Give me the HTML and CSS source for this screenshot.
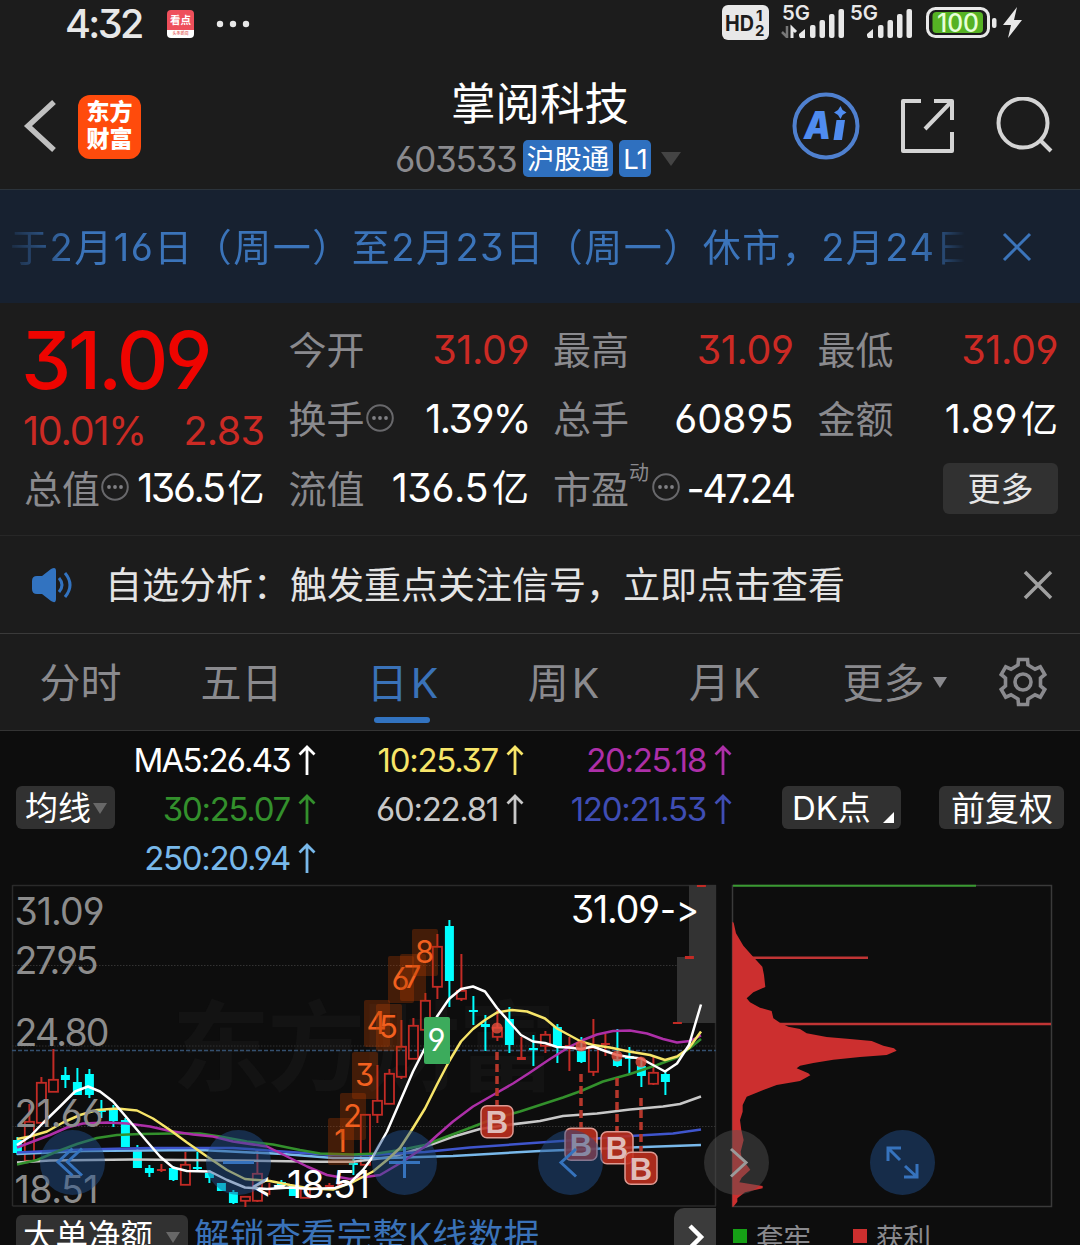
FILE: index.html
```
<!DOCTYPE html>
<html lang="zh-CN">
<head>
    <meta charset="UTF-8">
    <meta name="viewport" content="width=device-width, initial-scale=1.0">
    <title>掌阅科技 603533</title>
    <link rel="stylesheet" href="styles.css">
</head>
<body>
    <div class="screen">
        <!-- System status bar -->
        <div class="status-bar">
            <span class="clock">4:32</span>
            <span class="notif-icon"><b>看点</b><i>头条新闻</i></span>
            <svg class="notif-dots" width="34" height="8" viewBox="0 0 34 8">
                <circle cx="4" cy="4" r="3.2"/><circle cx="17" cy="4" r="3.2"/><circle cx="30" cy="4" r="3.2"/>
            </svg>
            <svg class="status-icons" width="302" height="48" viewBox="722 0 302 48">
                <rect x="722" y="5" width="47" height="35" rx="6" fill="#e8e8e8"/>
                <g class="hd-text">
                    <text x="725" y="30.500" font-size="21.500" textLength="29" lengthAdjust="spacingAndGlyphs">HD</text>
                    <text x="756" y="20.500" font-size="15">1</text>
                    <text x="755" y="36" font-size="15">2</text>
                </g>
                <g class="net-text">
                    <text x="782" y="20" font-size="20" textLength="28" lengthAdjust="spacingAndGlyphs">5G</text>
                    <text x="850" y="20" font-size="20" textLength="28" lengthAdjust="spacingAndGlyphs">5G</text>
                </g>
                <path d="M787 26v12M787 37l-5-5" fill="none" stroke="#777" stroke-width="2.500"/>
                <path d="M792 38V28l4 4" fill="none" stroke="#e8e8e8" stroke-width="3"/>
                <g fill="#e8e8e8">
                    <path d="M799 36v-2l6-5v9h-5z"/>
                    <rect x="810" y="25" width="5.500" height="13" rx="2"/>
                    <rect x="819.500" y="20" width="5.500" height="18" rx="2"/>
                    <rect x="829" y="14" width="5.500" height="24" rx="2"/>
                    <rect x="838.500" y="9" width="5.500" height="29" rx="2"/>
                    <path d="M867 36v-2l6-5v9h-5z"/>
                    <rect x="878" y="25" width="5.500" height="13" rx="2"/>
                    <rect x="887.500" y="20" width="5.500" height="18" rx="2"/>
                    <rect x="897" y="14" width="5.500" height="24" rx="2"/>
                    <rect x="906.500" y="9" width="5.500" height="29" rx="2"/>
                    <rect x="992" y="18" width="4.500" height="10" rx="2"/>
                    <path d="M1017 7l-14 18h8l-3 13 14-18h-8z"/>
                </g>
                <rect x="927.500" y="8.500" width="61" height="28" rx="8" fill="#1c1c1c" stroke="#e8e8e8" stroke-width="3"/>
                <rect x="932.500" y="12" width="50.500" height="21" rx="4" fill="#56b224"/>
                <text class="battery-text" x="937" y="32" font-size="25" textLength="42" lengthAdjust="spacingAndGlyphs">100</text>
            </svg>
        </div>

        <!-- Title bar -->
        <header class="header">
            <svg class="back" width="34" height="56" viewBox="0 0 34 56"><path d="M31 4L5 28l26 24"/></svg>
            <div class="logo">东方<br>财富</div>
            <div class="title">
                <h1>掌阅科技</h1>
                <div class="subtitle">
                    <span class="code">603533</span>
                    <span class="tag">沪股通</span>
                    <span class="tag tag-level">L1</span>
                    <span class="caret caret-large"></span>
                </div>
            </div>
            <div class="actions">
                <svg width="68" height="68" viewBox="0 0 68 68">
                    <circle cx="34" cy="34" r="31.500" fill="none" stroke="#4f80cf" stroke-width="4"/>
                    <text class="ai-text" x="12" y="47" font-size="38" textLength="27" lengthAdjust="spacingAndGlyphs">A</text>
                    <path d="M44.500 28h8.500l-3 20h-8.500z" fill="#4f8cf0"/>
                    <path d="M48.500 14l2 4 4 2.500-4 2.500-2 4-2.500-4-4-2.500 4-2.500z" fill="#4f8cf0"/>
                </svg>
                <svg class="line-icon" width="56" height="56" viewBox="0 0 56 56">
                    <path d="M21 3H3v50h49V34M34 3h18v19M52 3L25 31"/>
                </svg>
                <svg class="line-icon" width="58" height="58" viewBox="0 0 58 58">
                    <circle cx="27" cy="26" r="24.500"/><path d="M44 43l11 11"/>
                </svg>
            </div>
        </header>

        <!-- Scrolling holiday notice -->
        <div class="notice">
            <div class="notice-text">于2月16日（周一）至2月23日（周一）休市，2月24日</div>
            <svg class="notice-close" width="30" height="30" viewBox="0 0 30 30"><path d="M2 2l26 26M28 2L2 28"/></svg>
        </div>

        <!-- Quote data -->
        <section class="quote">
            <div class="quote-col">
                <div class="price">31.09</div>
                <div class="change"><span>10.01%</span><span class="diff">2.83</span></div>
                <div class="cell"><span class="label">总值</span><svg class="info"><use href="#info"/></svg><span class="value tight">136.5<em>亿</em></span></div>
            </div>
            <div class="quote-col">
                <div class="cell"><span class="label">今开</span><span class="value up">31.09</span></div>
                <div class="cell"><span class="label">换手</span><svg class="info"><use href="#info"/></svg><span class="value percent">1.39%</span></div>
                <div class="cell"><span class="label">流值</span><span class="value">136.5<em>亿</em></span></div>
            </div>
            <div class="quote-col">
                <div class="cell"><span class="label">最高</span><span class="value up">31.09</span></div>
                <div class="cell"><span class="label">总手</span><span class="value wide">60895</span></div>
                <div class="cell"><span class="label">市盈</span><sup>动</sup><svg class="info"><use href="#info"/></svg><span class="value tight">-47.24</span></div>
            </div>
            <div class="quote-col">
                <div class="cell"><span class="label">最低</span><span class="value up">31.09</span></div>
                <div class="cell"><span class="label">金额</span><span class="value">1.89<em>亿</em></span></div>
                <div class="cell"><button class="more-btn">更多</button></div>
            </div>
        </section>

        <!-- Watchlist analysis strip -->
        <div class="analysis">
            <svg width="42" height="36" viewBox="0 0 42 36">
                <path d="M1 14q0-5 5-5h5L20 2q5-3 5 2v28q0 5-5 2l-9-7H6q-5 0-5-5z" fill="#3273c0"/>
                <path d="M28 11q6 7 0 14M34 6q10 12 0 24" fill="none" stroke="#3273c0" stroke-width="3"/>
            </svg>
            <span class="analysis-text">自选分析：触发重点关注信号，立即点击查看</span>
            <svg class="analysis-close" width="30" height="30" viewBox="0 0 30 30"><path d="M2 2l26 26M28 2L2 28"/></svg>
        </div>

        <!-- Period tabs -->
        <nav class="tabs">
            <a class="tab">分时</a>
            <a class="tab">五日</a>
            <a class="tab active">日<span class="k">K</span></a>
            <a class="tab">周<span class="k">K</span></a>
            <a class="tab">月<span class="k">K</span></a>
            <a class="tab tab-more">更多<span class="caret caret-tab"></span></a>
            <svg class="gear" width="50" height="50" viewBox="0 0 50 50">
                <path d="M20 8L20.500 2.500H29.500L30 8L37 12.200L42.300 9.800L46.800 17.500L42.500 21V29L46.800 32.500L42.300 40.200L37 37.800L30 42L29.500 47.500H20.500L20 42L13 37.800L7.700 40.200L3.200 32.500L7.500 29V21L3.200 17.500L7.700 9.800L13 12.200Z"/>
                <circle cx="25" cy="25" r="8"/>
            </svg>
        </nav>

        <!-- Moving averages -->
        <div class="ma-bar">
            <button class="chip">均线<span class="caret caret-small"></span></button>
            <div class="ma-grid">
                <span class="ma ma5">MA5:26.43<svg><use href="#up"/></svg></span>
                <span class="ma ma10">10:25.37<svg><use href="#up"/></svg></span>
                <span class="ma ma20">20:25.18<svg><use href="#up"/></svg></span>
                <span class="ma ma30">30:25.07<svg><use href="#up"/></svg></span>
                <span class="ma ma60">60:22.81<svg><use href="#up"/></svg></span>
                <span class="ma ma120">120:21.53<svg><use href="#up"/></svg></span>
                <span class="ma ma250">250:20.94<svg><use href="#up"/></svg></span>
            </div>
            <button class="chip chip-dk">DK点<span class="corner"></span></button>
            <button class="chip chip-fq">前复权</button>
        </div>

        <!-- K line + chip distribution -->
        <div class="charts">
            <svg class="kline" id="kline" width="720" height="324" viewBox="0 884 720 324">
                <text class="watermark" x="172" y="1083" textLength="384">东方财富</text>
                <path d="M12.500 885.500H716M12.500 1206H716M12.500 885V1206M715.500 885V1206" stroke="#2a2a2a" stroke-width="1.500"/>
                <path d="M12 965.500H716M12 1046H716M12 1126.500H716" stroke="#333" stroke-dasharray="1.500 1.500"/>
                <path d="M12 1050.500H716" stroke="#34506f" stroke-width="1.500" stroke-dasharray="4 2"/>
                <rect x="677" y="957" width="39" height="66" fill="#333"/>
                <rect x="689" y="885" width="27" height="73" fill="#333"/>
                <g id="candles"></g>
                <g id="averages" fill="none" stroke-width="2.500" stroke-linejoin="round"></g>
                <g id="signals"></g>
                <g class="axis">
                    <text x="14.500" y="925" textLength="90">31.09</text>
                    <text x="14.500" y="974" textLength="84">27.95</text>
                    <text x="14.500" y="1046" textLength="95">24.80</text>
                    <text x="14.500" y="1127" textLength="89">21.66</text>
                    <text x="14.500" y="1203" textLength="84">18.51</text>
                </g>
                <g class="extreme">
                    <text x="571" y="923" textLength="89">31.09</text>
                    <text x="660" y="923" textLength="39" lengthAdjust="spacingAndGlyphs">-&gt;</text>
                    <text x="250" y="1198" textLength="37" lengthAdjust="spacingAndGlyphs">&lt;-</text>
                    <text x="287" y="1198" textLength="83">18.51</text>
                </g>
            </svg>
            <svg class="chips" width="360" height="324" viewBox="720 884 360 324">
                <path d="M732.500 885.500H1051.500V1206.500H732.500Z" fill="none" stroke="#3a3a3a" stroke-width="1.500"/>
                <path d="M733 885.800H976" stroke="#3a9a32" stroke-width="2"/>
                <path d="M750 957.700H868M780 1024H1051" stroke="#c03535" stroke-width="2.500"/>
                <g transform="translate(700 875) scale(0.33333)">
                    <path fill="#cc2f2f" d="M97 140L101 143L108 175L130 212L158 244L187 275L192 300L196 336L160 352L140 370L150 382L180 398L215 408L220 430L240 443L265 455L300 462L320 475L380 486L450 492L515 498L550 512L582 520L590 527L560 540L480 546L400 554L340 564L300 572L290 580L325 595L331 601L300 618L230 630L190 645L140 665L128 690L128 710L120 735L124 765L131 795L122 830L125 850L151 884L125 908L118 922L188 933L188 940L135 952L112 970L112 980L100 995H97Z"/>
                </g>
            </svg>
            <div class="controls">
                <svg class="round" viewBox="0 0 65 65"><path d="M32.500 18.500L18 32l14.500 13.500M42 18.500L27.500 32L42 45.500"/></svg>
                <svg class="round" viewBox="0 0 65 65"><path d="M17 32.500h31"/></svg>
                <svg class="round" viewBox="0 0 65 65"><path d="M17 32.500h31M32.500 17v31"/></svg>
                <svg class="round" viewBox="0 0 65 65"><path d="M38 19L23 32.500l15 14"/></svg>
                <svg class="round round-gray" viewBox="0 0 65 65"><path d="M27 19l15 13.500-15 14"/></svg>
                <svg class="round" viewBox="0 0 65 65"><path d="M18 31V18h13M18 18l12 12M35 36l12 11M34 47h13V34"/></svg>
            </div>
        </div>

        <!-- Sub indicator -->
        <div class="sub-bar">
            <button class="sub-btn">大单净额<span class="caret caret-small"></span></button>
            <a class="unlock">解锁查看完整K线数据</a>
            <span class="next"><svg width="20" height="28" viewBox="0 0 20 28"><path d="M4 3l11 11L4 25"/></svg></span>
            <span class="legend legend-green">套牢</span>
            <span class="legend legend-red">获利</span>
        </div>
    </div>

    <!-- Shared icons -->
    <svg width="0" height="0" class="defs">
        <symbol id="info" viewBox="0 0 28 28">
            <circle cx="14" cy="14" r="12.800" fill="none" stroke="#68686b" stroke-width="2"/>
            <g fill="#808084"><circle cx="8" cy="14" r="1.900"/><circle cx="14" cy="14" r="1.900"/><circle cx="20" cy="14" r="1.900"/></g>
        </symbol>
        <symbol id="up" viewBox="0 0 18 30">
            <path d="M9 30V2M1.500 9.500L9 2l7.500 7.500" fill="none" stroke="currentColor" stroke-width="2.800"/>
        </symbol>
    </svg>
    <script src="chart.js"></script>
</body>
</html>
```
FILE: styles.css
```
:root {
    --bg: #1c1c1c;
    --chart-bg: #0d0d0d;
    --gray: #8a8a8e;
    --blue: #3a72b8;
    --red: #cb2a24;
    --line: #343434;
}

* {
    box-sizing: border-box;
}

body {
    margin: 0;
    background: var(--chart-bg);
    font-family: Inter, "Noto Sans CJK SC", sans-serif;
    font-feature-settings: "cv03", "cv04", "cv09", "calt" 0;
    color: #fff;
}

.screen {
    width: 1080px;
    height: 1245px;
    overflow: hidden;
    display: flex;
    flex-direction: column;
    white-space: nowrap;
}

.screen > * {
    flex-shrink: 0;
}

svg {
    display: block;
    flex-shrink: 0;
}

.defs {
    position: absolute;
}

button {
    font: inherit;
    color: inherit;
    border: none;
    padding: 0;
    font-feature-settings: inherit;
}

.caret {
    display: inline-block;
    border-style: solid;
    border-color: #666 transparent transparent;
    border-width: 11px 7px 0;
}

/* status bar */
.status-bar {
    height: 48px;
    background: var(--bg);
    display: flex;
    align-items: center;
    padding-left: 65px;
}

.clock {
    width: 102px;
    font-size: 39.5px;
    font-weight: 500;
    letter-spacing: -2.6px;
    color: #e8e8e8;
    line-height: 48px;
    height: 48px;
}

.notif-icon {
    width: 27px;
    height: 28px;
    border-radius: 4px;
    background: linear-gradient(#ee4f5b 72%, #fff 72%);
    display: flex;
    flex-direction: column;
    align-items: center;
}

.notif-icon b {
    font-size: 10.5px;
    line-height: 21px;
}

.notif-icon i {
    font-size: 4px;
    font-style: normal;
    line-height: 6px;
    color: #d33;
}

.notif-dots {
    margin-left: 22px;
    fill: #e8e8e8;
}

.status-icons {
    margin-left: 472px;
}

.hd-text {
    fill: #1c1c1c;
    font-weight: 700;
}

.net-text {
    fill: #e8e8e8;
    font-weight: 600;
}

.battery-text {
    fill: #e6ffd8;
    font-weight: 500;
}

/* header */
.header {
    height: 142px;
    background: var(--bg);
    border-bottom: 1px solid #2b333b;
    display: flex;
    padding: 44px 26px 0 23px;
}

.back {
    margin-top: 6px;
    fill: none;
    stroke: #c0c0c0;
    stroke-width: 5.5;
}

.logo {
    width: 63px;
    height: 64px;
    margin: 3px 0 0 21px;
    border-radius: 12px;
    background: #ff4b0c;
    font-size: 23px;
    font-weight: 900;
    line-height: 27px;
    padding-top: 4px;
    text-align: center;
}

.title {
    width: 289px;
    margin: -20px 0 0 254px;
    display: flex;
    flex-direction: column;
}

h1 {
    margin: 0 0 0 56px;
    font-size: 44.5px;
    font-weight: 400;
    line-height: 64px;
}

.subtitle {
    display: flex;
    align-items: center;
    margin-top: 4px;
    height: 37px;
}

.code {
    color: var(--gray);
    font-size: 35px;
    letter-spacing: -1.2px;
    width: 128px;
}

.tag {
    width: 90px;
    height: 37px;
    border-radius: 5px;
    background: #2f70bf;
    font-size: 27.5px;
    line-height: 38px;
    text-align: center;
}

.tag-level {
    width: 32px;
    margin-left: 6px;
    letter-spacing: -1px;
}

.caret-large {
    margin-left: 10px;
    border-width: 14px 10.5px 0;
    border-top-color: #444;
}

.actions {
    display: flex;
    align-items: center;
    height: 68px;
    margin-left: auto;
}

.ai-text {
    fill: #4f8cf0;
    font-weight: 900;
    font-style: italic;
}

.line-icon {
    margin-left: 40px;
    fill: none;
    stroke: #d4d4d4;
    stroke-width: 4;
    stroke-linejoin: round;
}

/* notice */
.notice {
    height: 113px;
    background: #172130;
    display: flex;
    align-items: center;
    color: #3b74ba;
}

.notice-text {
    width: 965px;
    padding-left: 10px;
    overflow: hidden;
    font-size: 38px;
    letter-spacing: 1.5px;
    line-height: 60px;
    -webkit-mask-image: linear-gradient(90deg, transparent, #000 75px, #000 920px, transparent);
    mask-image: linear-gradient(90deg, transparent, #000 75px, #000 920px, transparent);
}

.notice-close {
    margin-left: 37px;
    stroke: #3b74ba;
    stroke-width: 3;
}

/* quote */
.quote {
    height: 233px;
    background: var(--bg);
    border-bottom: 1px solid #272727;
    display: flex;
    justify-content: space-between;
    padding: 12px 22px 0 24px;
}

.quote-col {
    width: 240.5px;
}

.cell {
    height: 69.5px;
    display: flex;
    align-items: center;
    position: relative;
}

.label {
    color: var(--gray);
    font-size: 38px;
    line-height: 60px;
}

.value {
    margin-left: auto;
    font-size: 39.5px;
    line-height: 60px;
    letter-spacing: -0.4px;
}

.value em {
    font-style: normal;
    font-size: 37px;
    letter-spacing: 0;
    margin-left: 4px;
}

.value.percent {
    letter-spacing: -1.6px;
    margin-right: -1px;
}

.value.tight {
    letter-spacing: -2.4px;
}

.value.wide {
    letter-spacing: 0;
}

.up {
    color: var(--red);
}

.info {
    width: 28px;
    height: 28px;
    margin-left: 1px;
    margin-top: -3px;
}

.cell sup {
    align-self: flex-start;
    margin-top: 5px;
    font-size: 20px;
    line-height: 28px;
    color: var(--gray);
    width: 22px;
}

.price {
    height: 90px;
    line-height: 90px;
    font-size: 80px;
    font-weight: 500;
    letter-spacing: -3.3px;
    margin-left: -3px;
    color: #ee0400;
}

.change {
    height: 49px;
    line-height: 52px;
    font-size: 39.5px;
    letter-spacing: -1.2px;
    margin-left: -1px;
    color: var(--red);
    display: flex;
    justify-content: space-between;
}

.diff {
    letter-spacing: -0.6px;
}

.more-btn {
    width: 115px;
    height: 51px;
    margin-left: auto;
    border-radius: 6px;
    background: #313131;
    color: #e6e6e6;
    font-size: 33px;
    line-height: 52px;
}

/* analysis */
.analysis {
    height: 98px;
    background: var(--bg);
    border-bottom: 1px solid #3a3a3a;
    display: flex;
    align-items: center;
    padding: 0 27px 0 31px;
}

.analysis-text {
    margin-left: 32px;
    font-size: 37px;
    line-height: 60px;
    padding-top: 3px;
    color: #e4e4e4;
}

.analysis-close {
    margin-left: auto;
    stroke: #a0a0a0;
    stroke-width: 3.5;
}

/* tabs */
.tabs {
    height: 97px;
    background: var(--bg);
    border-bottom: 1px solid var(--line);
    display: flex;
    align-items: center;
}

.tab {
    width: 161px;
    height: 96px;
    line-height: 98px;
    text-align: center;
    font-size: 41px;
    color: var(--gray);
    position: relative;
}

.k {
    margin-left: 3px;
}

.tab.active {
    color: var(--blue);
}

.tab.active::after {
    content: "";
    position: absolute;
    left: 52px;
    bottom: 7px;
    width: 56px;
    height: 6px;
    border-radius: 3px;
    background: #3273c0;
}

.tab-more {
    padding-left: 18px;
}

.caret-tab {
    margin-left: 8px;
    border-top-color: var(--gray);
    vertical-align: 10px;
}

.gear {
    margin-left: 32px;
    fill: none;
    stroke: var(--gray);
    stroke-width: 3.6;
}

/* moving averages */
.ma-bar {
    height: 153px;
    display: flex;
    align-items: center;
    padding: 0 16px;
}

.chip {
    width: 99px;
    height: 43px;
    border-radius: 6px;
    background: #313131;
    font-size: 33px;
    line-height: 43px;
    display: flex;
    align-items: center;
    padding: 2px 0 0 9px;
    position: relative;
}

.caret-small {
    border-color: #686868 transparent transparent;
    margin-left: 2px;
}

.chip-dk {
    width: 119px;
    margin-left: auto;
    padding-left: 10px;
    letter-spacing: -0.1px;
}

.chip-fq {
    width: 125px;
    margin-left: 38px;
    padding-left: 12px;
    font-size: 34px;
}

.corner {
    position: absolute;
    right: 7px;
    bottom: 6px;
    border-style: solid;
    border-width: 0 0 11px 11px;
    border-color: transparent transparent #fff;
}

.ma-grid {
    display: grid;
    grid-template-columns: 201px 208px 208px;
    grid-auto-rows: 49.3px;
    align-self: flex-start;
    padding-top: 4px;
}

.ma {
    display: flex;
    align-items: center;
    justify-content: flex-end;
    font-size: 33px;
    letter-spacing: -1.3px;
}

.ma svg {
    width: 18px;
    height: 30px;
    margin-left: 8px;
}

.ma5 { color: #fff; letter-spacing: -1.8px; }
.ma10 { color: #f7e569; }
.ma20 { color: #ad2fa8; }
.ma30 { color: #33902c; }
.ma60 { color: #c8c8c8; }
.ma120 { color: #3f4db4; }
.ma250 { color: #78b8ea; }

/* charts */
.charts {
    height: 324px;
    display: flex;
    position: relative;
}

.watermark {
    font-size: 98px;
    font-weight: 700;
    fill: #131313;
}

.axis {
    font-size: 37.5px;
    fill: #8c8c8c;
}

.extreme {
    font-size: 37.5px;
    fill: #fff;
}

.count {
    font-size: 31px;
    fill: #f2601f;
    text-anchor: middle;
}

.count-last {
    fill: #fff;
}

.signal {
    font-size: 31px;
    font-weight: 700;
    font-family: "Liberation Sans", sans-serif;
    fill: #e0bcb8;
    text-anchor: middle;
}

/* round buttons float over both charts */
.controls {
    position: absolute;
    left: 40px;
    top: 246px;
    display: flex;
    gap: 101px;
}

.round {
    width: 65px;
    height: 65px;
    border-radius: 50%;
    background: rgba(35, 80, 142, 0.47);
    fill: none;
    stroke: #3673bd;
    stroke-width: 3;
}

.round-gray {
    background: rgba(85, 85, 85, 0.45);
    stroke: #9a9a9a;
}

/* bottom row */
.sub-bar {
    height: 60px;
    display: flex;
    align-items: flex-start;
    padding-left: 16px;
}

.sub-btn {
    width: 172px;
    height: 50px;
    margin-top: 7px;
    border-radius: 6px;
    background: #313131;
    font-size: 32.5px;
    line-height: 43px;
    display: flex;
    padding-left: 7px;
}

.sub-btn .caret {
    margin: 17px 0 0 13px;
}

.unlock {
    margin-left: 6px;
    width: 480px;
    font-size: 35.5px;
    letter-spacing: 0.2px;
    line-height: 58px;
    color: var(--blue);
}

.next {
    width: 42px;
    height: 50px;
    border-radius: 10px 0 0 0;
    background: #3b3b3b;
    padding: 15px 0 0 12px;
}

.next path {
    fill: none;
    stroke: #fff;
    stroke-width: 4.5;
}

.legend {
    margin-left: 17px;
    width: 120px;
    display: flex;
    align-items: center;
    height: 56px;
    font-size: 27.5px;
    color: var(--gray);
}

.legend::before {
    content: "";
    width: 14px;
    height: 14px;
    margin-right: 9px;
    background: #16a016;
}

.legend-red {
    margin-left: 0;
}

.legend-red::before {
    background: #cc2f2f;
}
```
FILE: chart.js
```
const NS = 'http://www.w3.org/2000/svg';
const RED = '#c22b25';
const CYAN = '#00ffff';
const X0 = 17.4;
const STEP = 12;

// [direction, body top, body bottom, high, low], one per trading day
const candles = [
    ['d', 1140, 1153, 1137, 1155], ['u', 1121, 1161, 1104, 1161], ['u', 1082, 1123, 1077, 1123],
    ['u', 1079, 1092, 1049, 1092], ['d', 1075, 1080, 1067, 1088], ['d', 1082, 1095, 1068, 1095],
    ['d', 1074, 1095, 1069, 1098], ['d', 1109, 1112, 1100, 1118], ['d', 1110, 1121, 1105, 1127],
    ['d', 1120, 1147, 1118, 1147], ['d', 1151, 1168, 1145, 1168], ['d', 1168, 1173, 1165, 1177],
    ['u', 1169, 1170, 1164, 1172], ['d', 1168, 1180, 1166, 1181], ['u', 1164, 1185, 1152, 1185],
    ['d', 1167, 1168, 1152, 1170], ['d', 1173, 1178, 1170, 1183], ['d', 1183, 1191, 1183, 1191],
    ['d', 1192, 1203, 1190, 1204], ['u', 1196, 1201, 1196, 1207], ['u', 1173, 1201, 1150, 1202],
    ['u', 1188, 1189, 1183, 1195], ['d', 1182, 1186, 1180, 1187], ['d', 1186, 1196, 1186, 1196],
    ['u', 1187, 1198, 1187, 1198], ['u', 1187, 1188, 1184, 1190], ['u', 1185, 1186, 1183, 1188],
    ['u', 1184, 1185, 1182, 1187], ['d', 1163, 1165, 1158, 1175], ['u', 1114, 1165, 1114, 1165],
    ['u', 1100, 1115, 1065, 1123], ['u', 1073, 1104, 1069, 1104], ['u', 1046, 1077, 1020, 1079],
    ['u', 1025, 1059, 1018, 1059], ['u', 1000, 1030, 993, 1030], ['u', 946, 987, 934, 999],
    ['d', 926, 981, 920, 1007], ['u', 990, 999, 954, 1001], ['d', 1010, 1012, 996, 1025],
    ['d', 1024, 1027, 1015, 1051], ['u', 1027, 1037, 1010, 1041], ['d', 1019, 1045, 1007, 1053],
    ['u', 1057, 1060, 1037, 1059], ['d', 1048, 1050, 1035, 1066], ['u', 1034, 1046, 1031, 1053],
    ['d', 1027, 1046, 1024, 1063], ['u', 1045, 1046, 1037, 1071], ['d', 1051, 1062, 1037, 1063],
    ['u', 1047, 1072, 1019, 1076], ['u', 1043, 1044, 1034, 1056], ['d', 1059, 1066, 1029, 1067],
    ['d', 1056, 1059, 1047, 1075], ['d', 1066, 1076, 1060, 1087], ['u', 1072, 1084, 1057, 1085],
    ['d', 1074, 1082, 1071, 1095], ['u', 1022, 1024, 1022, 1024], ['u', 956, 959, 956, 959],
    ['u', 885, 887, 885, 887]
];

const averages = [
    // MA60, MA250, MA120
    ['#c8c8c8', '17,1162.5 50,1160.5 133,1159.5 233,1160.5 320,1161.7 353,1161.7 393,1156.7 425,1146.7 453,1136.7 480,1129 507,1125 540,1121 563,1116 597,1113.5 630,1109.5 663,1106.5 680,1104 701,1096.5'],
    ['#78b8ea', '17,1154 83,1151 200,1150 283,1154 333,1158 387,1158 453,1156 540,1151 630,1147.5 701,1145'],
    ['#3f55cc', '17,1152.5 83,1149.500 150,1148 233,1148 283,1151.500 333,1155 370,1155 425,1152 470,1147.5 540,1142.5 597,1138.500 630,1136 673,1133.5 701,1129.5'],
    // MA30, MA20, MA10, MA5
    ['#33902c', '17,1164.5 37,1160 57,1151.5 77,1144 97,1138 117,1135 140,1134 173,1133.500 200,1133.500 220,1136.500 247,1141.500 273,1144.500 300,1150 320,1153.500 353,1154.5 377,1153.5 400,1150 425,1145 443,1138 467,1129 493,1119 520,1111.5 563,1097.500 581,1091 603,1081.5 630,1074 657,1065 677,1057.500 690,1048 701,1039'],
    ['#ad2fa8', '17,1147.5 33,1141.500 50,1135 67,1127.500 83,1123.500 107,1122.500 127,1123.500 150,1126.500 170,1131 193,1134.500 213,1136.500 233,1141.500 267,1146.500 287,1156.500 307,1166.500 327,1175 350,1179 380,1175 403,1161.500 425,1146.500 437,1135.500 453,1121.500 473,1106.500 493,1095 513,1083.500 530,1072.500 550,1059 570,1046.500 583,1040 597,1034.500 613,1031 630,1030.500 647,1033.500 663,1039 677,1042.500 690,1041 701,1035.500'],
    ['#f7e569', '17,1139 30,1136.500 47,1131.500 63,1122.500 80,1115 97,1110 117,1108.500 137,1110.500 153,1118.500 170,1130 187,1142.500 207,1156.500 227,1170 245,1179 270,1181 290,1185 310,1188.500 333,1189.500 353,1182 373,1171.500 387,1160 400,1148 413,1128 425,1108.500 437,1084.500 449,1061.500 461,1041.500 473,1029 485,1020 497,1012.500 512,1010 527,1011.500 545,1018.500 557,1028.500 569,1035 581,1041.500 593,1045 610,1047.500 629,1051.500 650,1055 665,1060 677,1056.500 689,1048 701,1031.500'],
    ['#ffffff', '17,1145 30,1136.5 43,1123 60,1106.5 75,1091.5 88,1086.5 100,1091.5 113,1101.5 130,1121.5 147,1141.5 160,1156.5 173,1167.5 187,1171 210,1171.5 227,1180 245,1187.5 267,1189 290,1187.5 310,1189 335,1188 350,1183 363,1170 373,1156.5 387,1131.5 400,1101.5 413,1071.5 425,1048 437,1016.5 449,999 461,989 473,986.5 485,991.5 497,1008 509,1021.5 521,1035 533,1041.5 545,1043 557,1047 569,1047.5 581,1049 593,1046.5 605,1051 617,1055 629,1057 641,1058.5 653,1065 665,1071.5 677,1063.5 689,1045 701,1004.5']
];

// nine-turn counts: label, left, top
const counts = [
    ['1', 328, 1118], ['2', 340, 1093], ['3', 352, 1052], ['4', 364, 1000], ['5', 376, 1004],
    ['6', 388, 956], ['7', 400, 954], ['8', 412, 929], ['9', 424, 1017]
];

// buy signals: x, dot y, dash start, badge top
const buys = [
    [497, 1028, 1052, 1105], [581, 1046, 1074, 1127.5], [617, 1056, 1078, 1131], [641, 1062, 1098, 1151.5]
];

function add(parent, tag, attrs, text) {
    const el = document.createElementNS(NS, tag);
    for (const key in attrs) {
        el.setAttribute(key, attrs[key]);
    }
    if (text) el.textContent = text;
    parent.appendChild(el);
    return el;
}

const candleGroup = document.getElementById('candles');
candles.forEach(([dir, top, bottom, high, low], i) => {
    const x = X0 + STEP * i;
    const color = dir === 'u' ? RED : CYAN;
    const hollow = dir === 'u' && bottom - top > 3;
    if (high < top) {
        add(candleGroup, 'path', { d: `M${x} ${high}V${top}`, stroke: color, 'stroke-width': 2 });
    }
    if (low > bottom) {
        add(candleGroup, 'path', { d: `M${x} ${bottom}V${low}`, stroke: color, 'stroke-width': 2 });
    }
    if (hollow) {
        add(candleGroup, 'rect', { x: x - 4.6, y: top + 0.8, width: 9.2, height: bottom - top - 1, fill: 'none', stroke: color, 'stroke-width': 1.8 });
    } else {
        add(candleGroup, 'rect', { x: x - 4.5, y: top, width: 9, height: Math.max(bottom - top, 2), fill: color });
    }
});

const averageGroup = document.getElementById('averages');
averages.forEach(([color, points]) => add(averageGroup, 'polyline', { points, stroke: color }));

const signalGroup = document.getElementById('signals');
counts.forEach(([label, x, y]) => {
    const last = label === '9';
    add(signalGroup, 'rect', { x, y, width: 26, height: 47, rx: 2, fill: last ? '#3cab5c' : '#b43c00', 'fill-opacity': last ? 1 : 0.33 });
    add(signalGroup, 'text', { x: x + 12.5, y: y + 34, class: last ? 'count count-last' : 'count' }, label);
});
buys.forEach(([x, dot, from, top]) => {
    add(signalGroup, 'circle', { cx: x, cy: dot, r: 5.5, fill: '#e8503f', 'fill-opacity': 0.8 });
    add(signalGroup, 'path', { d: `M${x} ${from}V${top}`, stroke: '#b5372b', 'stroke-width': 3.5, 'stroke-dasharray': '8 4' });
    add(signalGroup, 'rect', { x: x - 16, y: top + 0.8, width: 32, height: 32, rx: 6, fill: '#c0301f', 'fill-opacity': 0.88, stroke: '#dd9a92', 'stroke-width': 1.5 });
    add(signalGroup, 'text', { x, y: top + 28, class: 'signal' }, 'B');
});
```
